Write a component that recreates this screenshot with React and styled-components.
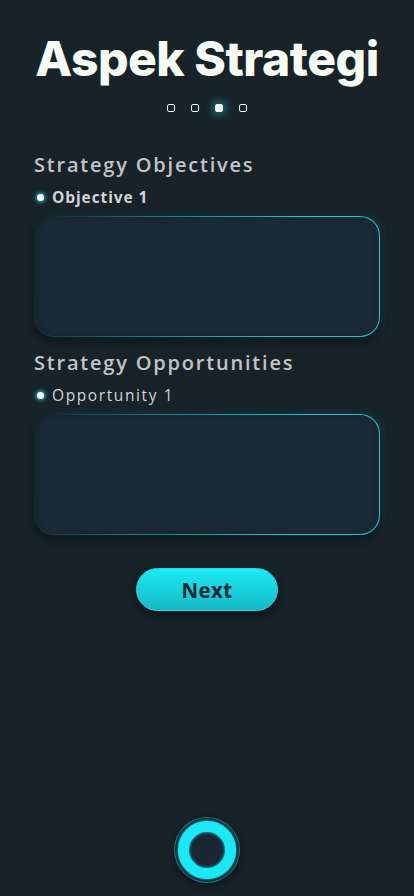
import styled, { createGlobalStyle } from 'styled-components';

const GlobalStyle = createGlobalStyle`
  * {
    box-sizing: border-box;
  }
  body {
    margin: 0;
    background: #172229;
  }
`;

const CYAN = '#1ac8d6';

// styled-components
const StPage = styled.div`
  min-height: 100vh;
  display: flex;
  flex-direction: column;
  align-items: stretch;
  padding: 30px 34px 13px;
  background: #172229;
  font-family: 'Open Sans', 'Noto Sans', sans-serif;
`;
const StTit = styled.h1`
  margin: 0;
  color: #f6fbf4;
  font-family: 'Inter', 'Noto Sans', sans-serif;
  font-size: 48px;
  font-weight: 800;
  line-height: 58px;
  letter-spacing: -0.5px;
  text-align: center;
`;
const StSteps = styled.div`
  display: flex;
  justify-content: center;
  gap: 16px;
  margin-top: 16px;
`;
const StStep = styled.span`
  width: 8px;
  height: 8px;
  border-radius: 2px;
  border: 1.5px solid #f2f7f2;
  background: ${(p) => (p.$active ? '#f2f7f2' : 'transparent')};
  box-shadow: ${(p) =>
    p.$active ? '0 0 8px 3px rgba(26, 200, 214, 0.45)' : 'none'};
`;
const StSection = styled.section`
  display: flex;
  flex-direction: column;
  margin-top: ${(p) => p.$top || 0}px;
`;
const StHead = styled.h2`
  margin: 0;
  color: #c4c4c6;
  font-size: 20px;
  font-weight: 600;
  letter-spacing: 1.8px;
  line-height: 26px;
`;
const StLabel = styled.div`
  display: flex;
  align-items: center;
  gap: 8px;
  margin-top: 9px;
  color: #d4d4d6;
  font-size: 15.5px;
  font-weight: ${(p) => (p.$bold ? 700 : 400)};
  letter-spacing: ${(p) => (p.$bold ? 0.9 : 1.6)}px;
  line-height: 20px;
`;
const StDot = styled.span`
  width: 7px;
  height: 7px;
  margin-left: 3px;
  border-radius: 50%;
  background: #ffffff;
  box-shadow: 0 0 4px 1px ${CYAN};
`;
const StBox = styled.textarea`
  display: block;
  width: 100%;
  height: 121px;
  margin-top: 9px;
  padding: 14px 18px;
  resize: none;
  outline: none;
  border: 1.5px solid transparent;
  border-radius: 20px;
  color: #e0e0e0;
  font: inherit;
  background:
    linear-gradient(#1b2a37, #1b2a37) padding-box,
    linear-gradient(
        100deg,
        rgba(26, 200, 214, 0) 2%,
        rgba(26, 200, 214, 0.5) 30%,
        ${CYAN} 75%
      )
      border-box;
  box-shadow:
    0 5px 8px rgba(0, 0, 0, 0.35),
    3px -1px 8px rgba(26, 200, 214, 0.12),
    inset 0 0 10px rgba(0, 0, 0, 0.18);
`;
const StBtnWrap = styled.div`
  display: flex;
  justify-content: center;
  margin-top: 33px;
`;
const StBtn = styled.button`
  width: 142px;
  height: 43px;
  border: 1px solid #25dbe6;
  border-radius: 22px;
  background: linear-gradient(to bottom, #1ceaf4, #16b9c5);
  color: #182a35;
  font-family: 'Open Sans', 'Noto Sans', sans-serif;
  font-size: 20.5px;
  font-weight: 700;
  letter-spacing: 0.4px;
  cursor: pointer;
  box-shadow: 0 4px 10px rgba(0, 0, 0, 0.45);
`;
const StNav = styled.div`
  margin-top: auto;
  display: flex;
  justify-content: center;
`;
const StRing = styled.div`
  width: 66px;
  height: 66px;
  display: flex;
  align-items: center;
  justify-content: center;
  border-radius: 50%;
  border: 1px solid rgba(26, 200, 214, 0.55);
  background: #16212a;
  box-shadow: 0 3px 8px rgba(0, 0, 0, 0.4);
`;
const StRingInner = styled.span`
  width: 58px;
  height: 58px;
  border-radius: 50%;
  border: 11.5px solid #1ae8f6;
  background: #1a2733;
  box-shadow:
    0 0 3px #1ae8f6,
    inset 0 0 3px #1ae8f6;
  filter: blur(0.7px);
`;

const steps = [0, 1, 2, 3];

const App = () => {
  return (
    <>
      <GlobalStyle />
      <StPage>
        <StTit>Aspek Strategi</StTit>
        <StSteps>
          {steps.map((el) => (
            <StStep key={el} $active={el === 2} />
          ))}
        </StSteps>

        <StSection $top={40}>
          <StHead>Strategy Objectives</StHead>
          <StLabel $bold>
            <StDot />
            Objective 1
          </StLabel>
          <StBox />
        </StSection>

        <StSection $top={13}>
          <StHead>Strategy Opportunities</StHead>
          <StLabel>
            <StDot />
            Opportunity 1
          </StLabel>
          <StBox />
        </StSection>

        <StBtnWrap>
          <StBtn>Next</StBtn>
        </StBtnWrap>

        <StNav>
          <StRing>
            <StRingInner />
          </StRing>
        </StNav>
      </StPage>
    </>
  );
};

export default App;
